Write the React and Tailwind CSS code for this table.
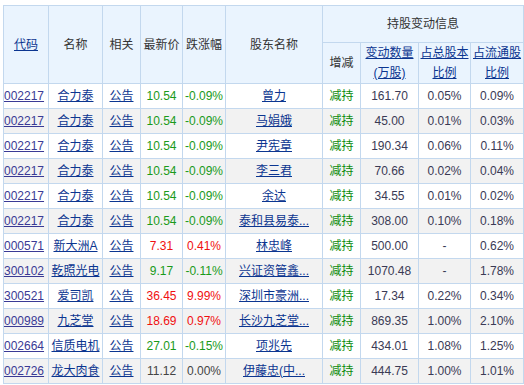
import React from "react";

const rows = [
  ["002217", "合力泰", "10.54", "-0.09%", "曾力", "161.70", "0.05%", "0.09%", "g", "g"],
  ["002217", "合力泰", "10.54", "-0.09%", "马娟娥", "45.00", "0.01%", "0.03%", "g", "g"],
  ["002217", "合力泰", "10.54", "-0.09%", "尹宪章", "190.34", "0.06%", "0.11%", "g", "g"],
  ["002217", "合力泰", "10.54", "-0.09%", "李三君", "70.66", "0.02%", "0.04%", "g", "g"],
  ["002217", "合力泰", "10.54", "-0.09%", "余达", "34.55", "0.01%", "0.02%", "g", "g"],
  ["002217", "合力泰", "10.54", "-0.09%", "泰和县易泰...", "308.00", "0.10%", "0.18%", "g", "g"],
  ["000571", "新大洲A", "7.31", "0.41%", "林忠峰", "500.00", "-", "0.62%", "r", "r"],
  ["300102", "乾照光电", "9.17", "-0.11%", "兴证资管鑫...", "1070.48", "-", "1.78%", "g", "g"],
  ["300521", "爱司凯", "36.45", "9.99%", "深圳市豪洲...", "17.34", "0.22%", "0.34%", "r", "r"],
  ["000989", "九芝堂", "18.69", "0.97%", "长沙九芝堂...", "869.35", "1.00%", "2.10%", "r", "r"],
  ["002664", "信质电机", "27.01", "-0.15%", "项兆先", "434.01", "1.08%", "1.25%", "g", "g"],
  ["002726", "龙大肉食", "11.12", "0.00%", "伊藤忠(中...", "444.75", "1.00%", "1.01%", "n", "n"],
];

const tone = {
  g: "text-[#1a9a1a]",
  r: "text-[#f01010]",
  n: "text-[#444444]",
};

const cell = "border border-[#c3d8ee] text-center p-0";
const link = "underline text-[#0b3590]";

export default function App() {
  return (
    <div
      className="bg-white w-[524px] h-[385px] overflow-hidden pt-[5px] pl-[3px]"
      style={{ fontFamily: '"Liberation Sans", "Noto Sans CJK SC", sans-serif' }}
    >
      <table className="border-collapse table-fixed w-[521px] text-[12px] text-[#333333]">
        <colgroup>
          <col className="w-[45px]" />
          <col className="w-[54px]" />
          <col className="w-[38px]" />
          <col className="w-[42px]" />
          <col className="w-[43px]" />
          <col className="w-[97px]" />
          <col className="w-[38px]" />
          <col className="w-[58px]" />
          <col className="w-[52px]" />
          <col className="w-[53px]" />
        </colgroup>
        <thead className="bg-[#eaf4fe]">
          <tr className="h-[37px]">
            <th rowSpan={2} className={`${cell} font-normal`}>
              <span className={link}>代码</span>
            </th>
            <th rowSpan={2} className={`${cell} font-normal`}>名称</th>
            <th rowSpan={2} className={`${cell} font-normal`}>相关</th>
            <th rowSpan={2} className={`${cell} font-normal whitespace-nowrap`}>最新价</th>
            <th rowSpan={2} className={`${cell} font-normal whitespace-nowrap`}>跌涨幅</th>
            <th rowSpan={2} className={`${cell} font-normal`}>股东名称</th>
            <th colSpan={4} className={`${cell} font-normal`}>持股变动信息</th>
          </tr>
          <tr className="h-[40px]">
            <th className={`${cell} font-normal`}>增减</th>
            <th className={`${cell} font-normal leading-[20px]`}>
              <span className={link}>变动数量</span>
              <br />
              <span className={link}>(万股)</span>
            </th>
            <th className={`${cell} font-normal leading-[20px]`}>
              <span className={link}>占总股本</span>
              <br />
              <span className={link}>比例</span>
            </th>
            <th className={`${cell} font-normal leading-[20px]`}>
              <span className={link}>占流通股</span>
              <br />
              <span className={link}>比例</span>
            </th>
          </tr>
        </thead>
        <tbody>
          {rows.map((r, i) => (
            <tr key={i} className={`h-[25px] ${i % 2 ? "bg-[#f2f2f2]" : "bg-white"}`}>
              <td className={`${cell} text-left`}>
                <span className="underline text-[#3a3a95]">{r[0]}</span>
              </td>
              <td className={`${cell} whitespace-nowrap`}>
                <span className={link}>{r[1]}</span>
              </td>
              <td className={cell}>
                <span className={link}>公告</span>
              </td>
              <td className={`${cell} ${tone[r[8]]}`}>{r[2]}</td>
              <td className={`${cell} ${tone[r[9]]}`}>{r[3]}</td>
              <td className={`${cell} whitespace-nowrap`}>
                <span className={link}>{r[4]}</span>
              </td>
              <td className={`${cell} text-[#0a8a0a]`}>减持</td>
              <td className={`${cell} text-[#3a3a55]`}>{r[5]}</td>
              <td className={`${cell} text-[#3a3a55]`}>{r[6]}</td>
              <td className={`${cell} text-[#3a3a55]`}>{r[7]}</td>
            </tr>
          ))}
        </tbody>
      </table>
    </div>
  );
}
